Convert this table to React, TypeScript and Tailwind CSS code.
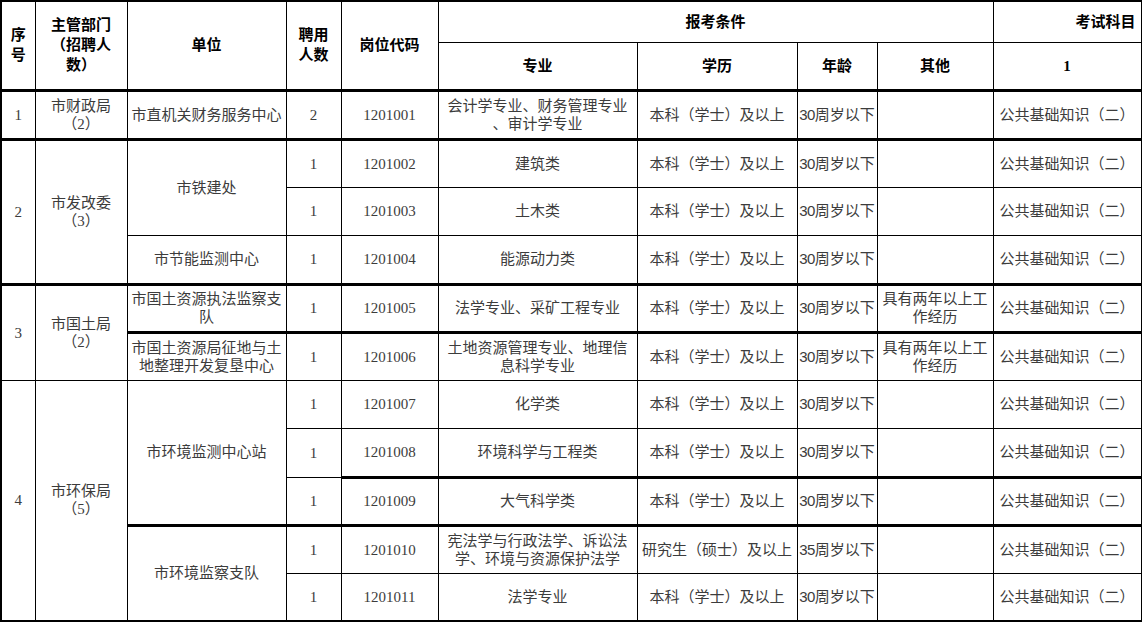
import React from "react";

const base =
  "border border-black text-center align-middle p-0 text-[15px] leading-[18px] text-[#3c3c3c] font-['Liberation_Serif','Noto_Sans_CJK_SC',serif]";
const head =
  "border border-black text-center align-middle p-0 text-[15px] leading-[20px] text-black font-bold font-['Liberation_Serif','Noto_Sans_CJK_SC',serif]";

type C = {
  t?: React.ReactNode;
  rs?: number;
  cs?: number;
  thick?: boolean;
  extra?: string;
};

function Td({ t, rs, cs, thick, extra }: C) {
  return (
    <td
      rowSpan={rs}
      colSpan={cs}
      className={`${base} ${thick ? "border-t-[3px]" : ""} ${extra ?? ""}`}
    >
      {t}
    </td>
  );
}

const Age = ({ n }: { n: string }) => (
  <span className="whitespace-nowrap">
    <span className="font-['Liberation_Sans_Narrow','Liberation_Sans',sans-serif] tracking-[-0.5px]">
      {n}
    </span>
    周岁以下
  </span>
);

const exam = "公共基础知识（二）";
const bk = "本科（学士）及以上";

function Two({ a, b }: { a: string; b: string }) {
  return (
    <>
      {a}
      <br />
      {b}
    </>
  );
}

export default function App() {
  return (
    <div className="w-[1143px] h-[623px] bg-white overflow-hidden">
      <table className="table-fixed border-collapse w-[1141px] border-t-2 border-l-2 border-b-2 border-black">
        <colgroup>
          <col className="w-[34px]" />
          <col className="w-[92px]" />
          <col className="w-[159px]" />
          <col className="w-[55px]" />
          <col className="w-[97px]" />
          <col className="w-[199px]" />
          <col className="w-[160px]" />
          <col className="w-[80px]" />
          <col className="w-[116px]" />
          <col className="w-[148px]" />
        </colgroup>
        <tbody>
          <tr className="h-[41px]">
            <td rowSpan={2} className={`${head} border-t-2`}>
              序<br />号
            </td>
            <td rowSpan={2} className={`${head} border-t-2 leading-[19px]`}>
              主管部门
              <br />
              （招聘人
              <br />
              数）
            </td>
            <td rowSpan={2} className={`${head} border-t-2`}>
              单位
            </td>
            <td rowSpan={2} className={`${head} border-t-2`}>
              聘用
              <br />
              人数
            </td>
            <td rowSpan={2} className={`${head} border-t-2`}>
              岗位代码
            </td>
            <td colSpan={4} className={`${head} border-t-2`}>
              报考条件
            </td>
            <td className={`${head} border-t-2 text-right pr-[5px]`}>考试科目</td>
          </tr>
          <tr className="h-[48px]">
            <td className={head}>专业</td>
            <td className={head}>学历</td>
            <td className={head}>年龄</td>
            <td className={head}>其他</td>
            <td className={head}>1</td>
          </tr>

          {/* group 1 */}
          <tr className="h-[49px]">
            <Td thick t="1" />
            <Td thick t={<Two a="市财政局" b="（2）" />} />
            <Td thick t="市直机关财务服务中心" />
            <Td thick t="2" />
            <Td thick t="1201001" />
            <Td thick t={<Two a="会计学专业、财务管理专业" b="、审计学专业" />} />
            <Td thick t={bk} />
            <Td thick t={<Age n="30" />} />
            <Td thick t="" />
            <Td thick t={exam} />
          </tr>

          {/* group 2 */}
          <tr className="h-[48px]">
            <Td thick rs={3} t="2" />
            <Td thick rs={3} t={<Two a="市发改委" b="（3）" />} />
            <Td thick rs={2} t="市铁建处" />
            <Td thick t="1" />
            <Td thick t="1201002" />
            <Td thick t="建筑类" />
            <Td thick t={bk} />
            <Td thick t={<Age n="30" />} />
            <Td thick t="" />
            <Td thick t={exam} />
          </tr>
          <tr className="h-[48px]">
            <Td t="1" />
            <Td t="1201003" />
            <Td t="土木类" />
            <Td t={bk} />
            <Td t={<Age n="30" />} />
            <Td t="" />
            <Td t={exam} />
          </tr>
          <tr className="h-[49px]">
            <Td t="市节能监测中心" />
            <Td t="1" />
            <Td t="1201004" />
            <Td t="能源动力类" />
            <Td t={bk} />
            <Td t={<Age n="30" />} />
            <Td t="" />
            <Td t={exam} />
          </tr>

          {/* group 3 */}
          <tr className="h-[48px]">
            <Td thick rs={2} t="3" />
            <Td thick rs={2} t={<Two a="市国土局" b="（2）" />} />
            <Td thick t={<Two a="市国土资源执法监察支" b="队" />} />
            <Td thick t="1" />
            <Td thick t="1201005" />
            <Td thick t="法学专业、采矿工程专业" />
            <Td thick t={bk} />
            <Td thick t={<Age n="30" />} />
            <Td thick t={<Two a="具有两年以上工" b="作经历" />} />
            <Td thick t={exam} />
          </tr>
          <tr className="h-[48px]">
            <Td thick t={<Two a="市国土资源局征地与土" b="地整理开发复垦中心" />} />
            <Td thick t="1" />
            <Td thick t="1201006" />
            <Td thick t={<Two a="土地资源管理专业、地理信" b="息科学专业" />} />
            <Td thick t={bk} />
            <Td thick t={<Age n="30" />} />
            <Td thick t={<Two a="具有两年以上工" b="作经历" />} />
            <Td thick t={exam} />
          </tr>

          {/* group 4 */}
          <tr className="h-[48px]">
            <Td rs={5} t="4" />
            <Td rs={5} t={<Two a="市环保局" b="（5）" />} />
            <Td rs={3} t="市环境监测中心站" />
            <Td t="1" />
            <Td t="1201007" />
            <Td t="化学类" />
            <Td t={bk} />
            <Td t={<Age n="30" />} />
            <Td t="" />
            <Td t={exam} />
          </tr>
          <tr className="h-[49px]">
            <Td t="1" />
            <Td t="1201008" />
            <Td t="环境科学与工程类" />
            <Td t={bk} />
            <Td t={<Age n="30" />} />
            <Td t="" />
            <Td t={exam} />
          </tr>
          <tr className="h-[48px]">
            <Td t="1" />
            <Td thick t="1201009" />
            <Td thick t="大气科学类" />
            <Td thick t={bk} />
            <Td thick t={<Age n="30" />} />
            <Td thick t="" />
            <Td thick t={exam} />
          </tr>
          <tr className="h-[48px]">
            <Td thick rs={2} t="市环境监察支队" />
            <Td thick t="1" />
            <Td thick t="1201010" />
            <Td thick t={<Two a="宪法学与行政法学、诉讼法" b="学、环境与资源保护法学" />} />
            <Td thick t="研究生（硕士）及以上" />
            <Td thick t={<Age n="35" />} />
            <Td thick t="" />
            <Td thick t={exam} />
          </tr>
          <tr className="h-[48px]">
            <Td extra="border-b-2" t="1" />
            <Td extra="border-b-2" t="1201011" />
            <Td extra="border-b-2" t="法学专业" />
            <Td extra="border-b-2" t={bk} />
            <Td extra="border-b-2" t={<Age n="30" />} />
            <Td extra="border-b-2" t="" />
            <Td extra="border-b-2" t={exam} />
          </tr>
        </tbody>
      </table>
    </div>
  );
}
